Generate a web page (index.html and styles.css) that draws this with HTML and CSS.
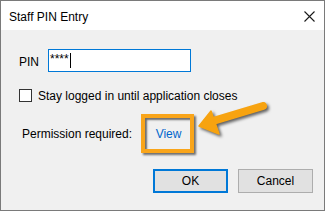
FILE: index.html
```html
<!DOCTYPE html>
<html>
<head>
<meta charset="utf-8">
<link rel="stylesheet" href="styles.css">
</head>
<body>
<div class="window">
  <div class="titlebar">
    <span class="title">Staff PIN Entry</span>
    <svg class="close" width="11" height="11" viewBox="0 0 11 11"><path d="M0.5 0.5 L10.5 10.5 M10.5 0.5 L0.5 10.5" stroke="#1a1a1a" stroke-width="1.1" fill="none"/></svg>
  </div>
  <div class="content">
    <div class="pin-row">
      <span class="label">PIN</span>
      <div class="input"><span class="stars">****</span><span class="caret"></span></div>
    </div>
    <div class="check-row">
      <span class="checkbox"></span>
      <span>Stay logged in until application closes</span>
    </div>
    <div class="perm-row">
      <span>Permission required:</span>
      <span class="callout"><span class="link">View</span></span>
    </div>
    <div class="buttons">
      <span class="btn btn-default">OK</span>
      <span class="btn">Cancel</span>
    </div>
  </div>
  <svg class="arrow" width="325" height="211" viewBox="0 0 325 211">
    <g class="arrow-shape">
      <line x1="213" y1="121" x2="263" y2="106" stroke="#f7a310" stroke-width="8" stroke-linecap="round"/>
      <polygon points="199,126 211,111 219,134" fill="#f7a310" stroke="#f7a310" stroke-width="1.5" stroke-linejoin="round"/>
    </g>
  </svg>
</div>
</body>
</html>
```
FILE: styles.css
```css
* { box-sizing: border-box; }
html, body { margin: 0; padding: 0; }
body {
  font-family: "Liberation Sans", Arial, sans-serif;
  font-size: 12px;
  color: #000;
  background: #f0f0f0;
}
.window {
  position: relative;
  width: 325px;
  height: 211px;
  border: 1px solid #7a7a7a;
  background: #f0f0f0;
  overflow: hidden;
}
.titlebar {
  height: 29px;
  background: #fff;
  display: flex;
  align-items: center;
  justify-content: space-between;
  padding: 0 9px 0 8px;
}
.title { font-size: 12px; padding-top: 2px; }
.close { display: block; margin-top: 2px; }
.content {
  padding: 19px 11px 0 18px;
  display: flex;
  flex-direction: column;
}
.pin-row {
  display: flex;
  align-items: center;
  height: 23px;
}
.label { width: 29px; padding-top: 3px; }
.input {
  width: 143px;
  height: 23px;
  background: #fff;
  border: 1px solid #0078d7;
  display: flex;
  align-items: center;
  padding-left: 1px;
}
.stars { font-size: 12px; line-height: 12px; margin-top: -3px; }
.caret { width: 1px; height: 15px; background: #000; margin-left: 1px; }
.check-row {
  display: flex;
  align-items: center;
  margin-top: 17px;
  height: 13px;
}
.checkbox {
  width: 13px;
  height: 13px;
  border: 1px solid #333;
  background: #fff;
  margin-right: 6px;
}
.perm-row {
  display: flex;
  align-items: center;
  margin-top: 12px;
  padding-left: 3px;
}
.callout {
  margin-left: 9px;
  width: 53px;
  height: 39px;
  border: 4px solid #f9a51a;
  display: flex;
  align-items: center;
  justify-content: center;
  padding-left: 2px;
  box-shadow: 2px 2px 2px rgba(0,0,0,0.55), inset 2px 2px 2px rgba(0,0,0,0.55);
}
.link { color: #0066cc; }
.buttons {
  display: flex;
  justify-content: flex-end;
  gap: 10px;
  margin-top: 16px;
}
.btn {
  width: 75px;
  height: 24px;
  background: #e1e1e1;
  border: 1px solid #adadad;
  display: flex;
  align-items: center;
  justify-content: center;
}
.btn-default { border: 2px solid #0078d7; }
.arrow {
  position: absolute;
  left: -1px;
  top: -1px;
  pointer-events: none;
}
.arrow-shape { filter: drop-shadow(2px 2px 1.5px rgba(0,0,0,0.6)); }
```
